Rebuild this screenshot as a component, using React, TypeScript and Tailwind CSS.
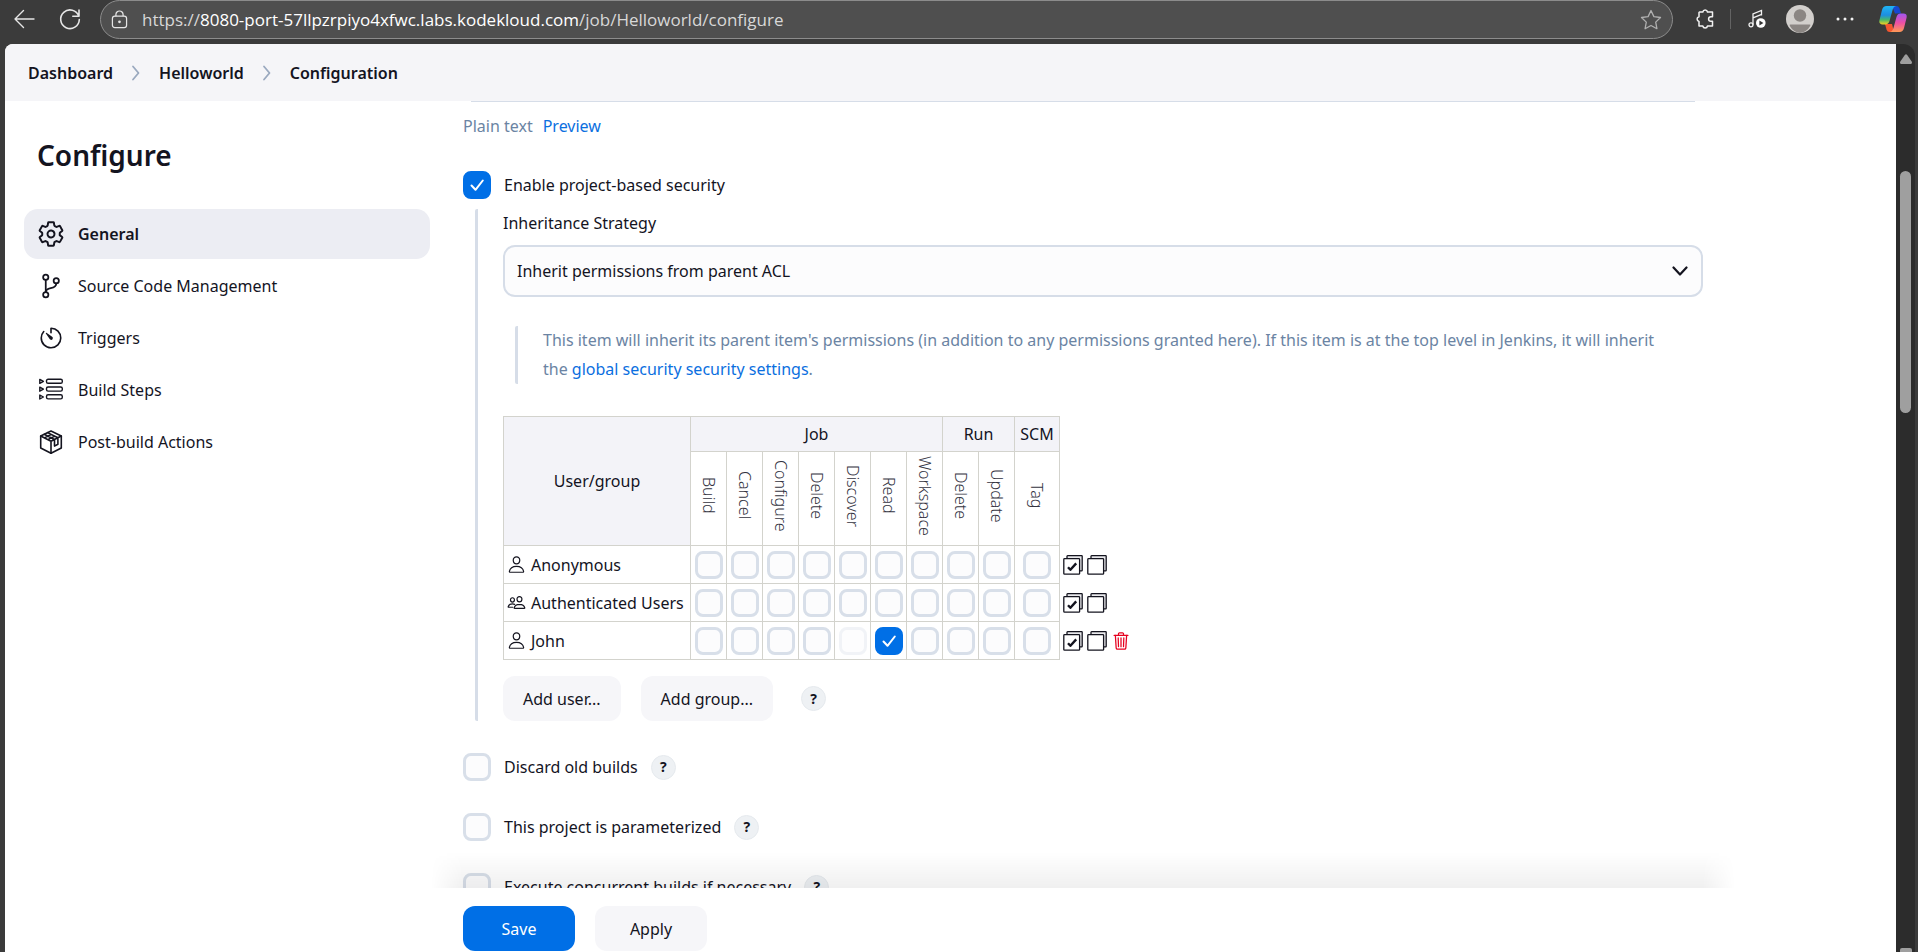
import { ReactNode } from "react";
import {
  IoGitBranchOutline,
  IoPeopleOutline,
  IoPersonOutline,
  IoSettingsOutline,
  IoTimerOutline,
  IoTrashOutline,
} from "react-icons/io5";

function Checkbox({ id, label, checked = false, disabled = false }: { id?: string; label?: string; checked?: boolean; disabled?: boolean }) {
  return (
    <span className="inline-grid size-7 shrink-0 align-middle">
      <input
        id={id}
        type="checkbox"
        aria-label={label}
        defaultChecked={checked}
        disabled={disabled}
        className="peer col-start-1 row-start-1 size-7 appearance-none rounded-lg border-3 border-[#d8dfe9] bg-[#fcfcfd] checked:border-[#006fe6] checked:bg-[#006fe6] disabled:opacity-35"
      />
      <svg viewBox="0 0 28 28" className="pointer-events-none invisible col-start-1 row-start-1 size-7 peer-checked:visible" fill="none" stroke="#fff" strokeWidth="2" strokeLinecap="round" strokeLinejoin="round">
        <path d="M8.5 14.5l4 4.3 7.3-9.3" />
      </svg>
    </span>
  );
}

function Help({ topic }: { topic: string }) {
  return (
    <button type="button" aria-label={`Help for ${topic}`} className="flex size-[25px] shrink-0 items-center justify-center rounded-full border border-[#e6eaee] bg-[#eef1f4] text-sm font-bold leading-none">
      ?
    </button>
  );
}

function Steps() {
  return (
    <svg viewBox="0 0 24 24" className="size-6" fill="none" stroke="currentColor" strokeWidth="1.4" strokeLinejoin="round">
      {[3.2, 11, 18.8].map((y) => (
        <g key={y}>
          <path d={`M.8 ${y - 1.8}v4l3.6-2z`} />
          <rect x="7.5" y={y - 2} width="15.8" height="4.1" rx="1.6" />
        </g>
      ))}
    </svg>
  );
}

function PackageBox() {
  return (
    <svg viewBox="0 0 24 24" className="size-6" fill="none" stroke="currentColor" strokeWidth="1.6" strokeLinejoin="round" strokeLinecap="round">
      <path d="M12 1L22.3 6v12L12 23.2 1.700 18V6z" />
      <path d="M1.700 6L12 11.2 22.3 6M12 11.2v12M5.200 4.300l10.300 5.200v6.600l3.400-1.800V7.800L8.600 2.600M5.400 7.900l6.600-3.400M8.800 9.600l6.600-3.400" />
    </svg>
  );
}

const sections: { name: string; icon: ReactNode }[] = [
  { name: "General", icon: <IoSettingsOutline className="size-7 [&_path]:[stroke-width:36px]" /> },
  { name: "Source Code Management", icon: <IoGitBranchOutline className="size-7" /> },
  { name: "Triggers", icon: <IoTimerOutline className="size-[26px]" /> },
  { name: "Build Steps", icon: <Steps /> },
  { name: "Post-build Actions", icon: <PackageBox /> },
];

const groups = [
  { name: "Job", permissions: ["Build", "Cancel", "Configure", "Delete", "Discover", "Read", "Workspace"] },
  { name: "Run", permissions: ["Delete", "Update"] },
  { name: "SCM", permissions: ["Tag"] },
];

const columns = groups.flatMap((g) => g.permissions.map((p) => `${g.name}/${p}`));

const subjects = [
  { name: "Anonymous", kind: "person", granted: "", implied: "", removable: false },
  { name: "Authenticated Users", kind: "people", granted: "", implied: "", removable: false },
  { name: "John", kind: "person", granted: "Job/Read", implied: "Job/Discover", removable: true },
];

function StackIcon({ ticked }: { ticked: boolean }) {
  return (
    <svg viewBox="0 0 20 20" className="size-5" fill="none" stroke="currentColor" strokeWidth="1.3" strokeLinejoin="round">
      <path d="M4 3.5V1.3q0-.6.6-.6h14q.6 0 .6.6v14q0 .6-.6.6h-2" fill="#e9e9ec" />
      <rect x=".8" y="3.6" width="15.8" height="15.6" rx=".8" fill="#fff" />
      {ticked && <path d="M5 12.2l2.4 2.6 5.8-6.4" strokeWidth="2.4" />}
    </svg>
  );
}

function BrowserBar() {
  return (
    <header className="flex h-11 shrink-0 items-start text-[#e6e6e6]">
      <button type="button" aria-label="Back" className="mt-2 ml-3 flex size-6 items-center justify-center">
        <svg viewBox="0 0 24 24" className="size-6" fill="none" stroke="currentColor" strokeWidth="1.4" strokeLinecap="round" strokeLinejoin="round">
          <path d="M22 11H3M11.5 2.500L3 11l8.500 8.500" />
        </svg>
      </button>
      <button type="button" aria-label="Refresh" className="mt-2 ml-[22px] flex size-6 items-center justify-center">
        <svg viewBox="0 0 24 24" className="size-6" fill="none" stroke="currentColor" strokeWidth="1.6" strokeLinecap="round" strokeLinejoin="round">
          <path d="M20.800 8.200A9.300 9.300 0 1 0 21.300 11.500M21 2v6.200h-6.200" />
        </svg>
      </button>
      <div className="ml-[18px] flex h-[39px] min-w-0 flex-1 items-center rounded-full border border-[#8c8c8c] bg-[#4f4f4f] pr-2.5 pl-2.5">
        <svg viewBox="0 0 18 20" className="h-[19px] w-[17px] shrink-0" fill="none" stroke="currentColor" strokeWidth="1.300">
          <rect x="1.500" y="6.500" width="15" height="12" rx="2.500" />
          <path d="M5.200 6.500V4.800a3.800 3.800 0 0 1 7.600 0v1.700" />
          <circle cx="9" cy="12.500" r=".8" fill="currentColor" />
        </svg>
        <p className="ml-3.5 flex-1 truncate font-['Open_Sans','Noto_Sans',sans-serif] text-[17px] leading-6 text-[#d8d8d8]">
          https://<span className="text-white">8080-port-57llpzrpiyo4xfwc.labs.kodekloud.com</span>/job/Helloworld/configure
        </p>
        <button type="button" aria-label="Add to favorites">
          <svg viewBox="0 0 22 22" className="size-[22px]" fill="none" stroke="#b0b0b0" strokeWidth="1.300" strokeLinejoin="round">
            <path d="M11 1.500l2.900 6.100 6.600.9-4.800 4.600 1.200 6.600L11 16.500l-5.900 3.200 1.200-6.600L1.500 8.500l6.600-.9z" />
          </svg>
        </button>
      </div>
      <div className="flex h-[38px] items-center">
        <svg viewBox="0 0 20 22" className="ml-[22px] h-[22px] w-5" fill="none" stroke="#f2f2f2" strokeWidth="1.500" strokeLinejoin="round">
          <path d="M4.500 4h3.300a2.400 2.400 0 0 1 4.700 0h5v4.700h-1.600a2.300 2.300 0 0 0 0 4.600h1.600V18h-5a2.400 2.400 0 0 1-4.700 0H4v-4.600a2.400 2.400 0 0 1 0-4.700V4.500z" />
        </svg>
        <span className="ml-[15px] h-5 w-px bg-[#636363]" />
        <svg viewBox="0 0 18 20" className="ml-[17px] h-5 w-[18px]" fill="none" stroke="#f2f2f2" strokeWidth="1.300">
          <circle cx="3" cy="15.800" r="2" />
          <path d="M5 15.800V5l8.500-3.500v5M5 8.800l8-3.200" />
          <circle cx="12.800" cy="14" r="4.800" fill="#fff" stroke="none" />
          <path d="M11.400 11.600v4.800l4-2.400z" fill="#333" stroke="none" />
        </svg>
        <svg viewBox="0 0 28 28" className="ml-[20px] size-7">
          <circle cx="14" cy="14" r="14" fill="#d2cfcc" />
          <circle cx="14" cy="10.500" r="6.200" fill="#8b8683" />
          <path d="M4.500 19.500h19q1.500 0 .6 1.400A14 14 0 0 1 14 28a14 14 0 0 1-10.100-7.100q-.9-1.400.6-1.400z" fill="#8b8683" />
        </svg>
        <svg viewBox="0 0 18 4" className="ml-[22px] h-1 w-[18px]" fill="#f2f2f2">
          <circle cx="2" cy="2" r="1.500" />
          <circle cx="9" cy="2" r="1.500" />
          <circle cx="16" cy="2" r="1.500" />
        </svg>
        <svg viewBox="0 0 28 26" className="mr-[11px] ml-[25px] h-[26px] w-7">
          <defs>
            <linearGradient id="cpLeft" x1="0" y1="0" x2="0" y2="1">
              <stop offset="0" stopColor="#1fb4f5" />
              <stop offset=".5" stopColor="#1d8ee0" />
              <stop offset=".75" stopColor="#48b96a" />
              <stop offset="1" stopColor="#f3d021" />
            </linearGradient>
            <linearGradient id="cpRight" x1="0" y1="0" x2="0" y2="1">
              <stop offset="0" stopColor="#a056f0" />
              <stop offset=".5" stopColor="#ec4fa4" />
              <stop offset="1" stopColor="#ff9a55" />
            </linearGradient>
          </defs>
          <path d="M13 0h4.500q2.200 0 2.900 2.200L22 7.500h-6z" fill="#1648d0" />
          <path d="M6 18h7l2 8h-4.500q-2.200 0-2.900-2.200z" fill="#f4562f" />
          <path d="M7.500 0H17q-2.400.3-3.300 3.500L10.500 15q-1 3.400-4.300 3.400H3.500Q-.5 18.400.5 14L3 4Q4 0 7.500 0z" fill="url(#cpLeft)" />
          <path d="M20.500 26H11q2.400-.3 3.300-3.500L17.500 11q1-3.400 4.300-3.400h2.700q4 0 3 4.400L25 22q-1 4-4.500 4z" fill="url(#cpRight)" />
        </svg>
      </div>
    </header>
  );
}

function PermissionTable() {
  const cell = "border border-[#d3d3cd]";
  return (
    <div className="mt-8 flex items-end">
      <table className="border-collapse leading-6">
        <thead>
          <tr className="h-[35px]">
            <th rowSpan={2} className={`${cell} w-[187px] bg-[#f3f3f8] font-normal`}>User/group</th>
            {groups.map((g) => (
              <th key={g.name} colSpan={g.permissions.length} className={`${cell} bg-[#f3f3f8] p-0 font-normal`}>{g.name}</th>
            ))}
          </tr>
          <tr className="h-[94px]">
            {columns.map((c) => (
              <th key={c} className={`${cell} ${c === "SCM/Tag" ? "w-[45px]" : "w-9"} p-0 pb-1.5 text-base font-light text-[#33333f]`}>
                <span className="inline-block align-middle leading-6 [writing-mode:vertical-rl]">{c.split("/")[1]}</span>
              </th>
            ))}
          </tr>
        </thead>
        <tbody>
          {subjects.map((s) => (
            <tr key={s.name} className="h-[38px]">
              <td className={`${cell} px-[3px]`}>
                <span className="flex items-center gap-[5px] whitespace-nowrap">
                  {s.kind === "person" ? <IoPersonOutline className="size-[19px]" /> : <IoPeopleOutline className="size-[19px]" />}
                  {s.name}
                </span>
              </td>
              {columns.map((c) => (
                <td key={c} className={`${cell} p-0 text-center leading-none`}>
                  <Checkbox label={`${c} for ${s.name}`} checked={s.granted === c} disabled={s.implied === c} />
                </td>
              ))}
            </tr>
          ))}
        </tbody>
      </table>
      <ul className="ml-[3px]">
        {subjects.map((s) => (
          <li key={s.name} className="flex h-[38px] items-center gap-1">
            <button type="button" aria-label={`Select all for ${s.name}`}><StackIcon ticked /></button>
            <button type="button" aria-label={`Unselect all for ${s.name}`}><StackIcon ticked={false} /></button>
            {s.removable && (
              <button type="button" aria-label={`Remove ${s.name}`} className="text-[#e6001f]">
                <IoTrashOutline className="size-5" />
              </button>
            )}
          </li>
        ))}
      </ul>
    </div>
  );
}

const options = [
  { id: "discard", name: "Discard old builds" },
  { id: "parameterized", name: "This project is parameterized" },
  { id: "concurrent", name: "Execute concurrent builds if necessary" },
];

function Separator() {
  return (
    <svg viewBox="0 0 10 16" className="h-4 w-2.5" fill="none" stroke="#9aa9bf" strokeWidth="1.800" strokeLinecap="round" strokeLinejoin="round">
      <path d="M2 1.500L7.500 8 2 14.500" />
    </svg>
  );
}

export default function App() {
  return (
    <div className="flex h-screen flex-col overflow-hidden bg-[#3b3b3b] font-['Noto_Sans','Open_Sans',sans-serif] text-base text-[#14141f]">
      <BrowserBar />
      <div className="flex min-h-0 flex-1 pr-[3px] pl-[5px]">
        <div className="flex min-w-0 flex-1 flex-col overflow-hidden rounded-tl-lg bg-white">
          <nav aria-label="Breadcrumb" className="flex h-[57px] shrink-0 items-center gap-[18px] bg-[#f5f5f8] px-[23px] font-semibold">
            <a href="#dashboard">Dashboard</a>
            <Separator />
            <a href="#helloworld">Helloworld</a>
            <Separator />
            <a href="#configuration">Configuration</a>
          </nav>
          <div className="flex min-h-0 flex-1">
            <aside className="w-[458px] shrink-0 pr-[33px] pl-[19px]">
              <h1 className="mt-8 pl-[13px] text-[28px] leading-[44px] font-semibold">Configure</h1>
              <nav aria-label="Sections" className="mt-8 flex flex-col gap-0.5">
                {sections.map((s, i) => (
                  <a
                    key={s.name}
                    href={`#${s.name}`}
                    className={i === 0 ? "flex h-[50px] items-center gap-[13px] rounded-[14px] bg-[#ecedf3] px-[13px] font-semibold" : "flex h-[50px] items-center gap-[13px] rounded-[14px] px-[13px]"}
                  >
                    <span className="flex size-7 items-center justify-center">{s.icon}</span>
                    {s.name}
                  </a>
                ))}
              </nav>
            </aside>
            <main className="mr-8 flex max-w-[1240px] min-w-0 flex-1 flex-col">
              <div className="min-h-0 flex-1 overflow-hidden">
                <div className="mx-2 h-px bg-[#d6dde8]" />
                <div className="mt-3 flex gap-2.5 leading-6">
                  <span className="text-[#6b84a3]">Plain text</span>
                  <a href="#preview" className="text-[#0b6fe0]">Preview</a>
                </div>
                <div className="mt-[33px] flex items-center gap-[13px]">
                  <Checkbox id="security" checked />
                  <label htmlFor="security">Enable project-based security</label>
                </div>
                <div className="mt-2.5 ml-3 flex flex-col rounded-xs border-l-[3px] border-[#d6dde8] pl-[25px]">
                  <label htmlFor="strategy" className="leading-7">Inheritance Strategy</label>
                  <div className="mt-2 grid">
                    <select id="strategy" className="col-start-1 row-start-1 h-[52px] w-full appearance-none rounded-xl border-2 border-[#d6dde8] bg-[#fcfcfd] px-3">
                      <option>Inherit permissions from parent ACL</option>
                    </select>
                    <svg viewBox="0 0 16 10" className="pointer-events-none col-start-1 row-start-1 mr-[15px] h-2.5 w-4 self-center justify-self-end" fill="none" stroke="currentColor" strokeWidth="2.200" strokeLinecap="round" strokeLinejoin="round">
                      <path d="M1.500 1.500L8 8.500l6.500-7" />
                    </svg>
                  </div>
                  <p className="mt-[29px] ml-3 rounded-xs border-l-[3px] border-[#d6dde8] pr-8 pl-[25px] leading-[29px] text-[#6b84a3]">
                    This item will inherit its parent item's permissions (in addition to any permissions granted here). If this item is at the top level in Jenkins, it will inherit
                    the <a href="#global-security" className="text-[#0b6fe0]">global security security settings</a>.
                  </p>
                  <PermissionTable />
                  <div className="mt-4 flex items-center gap-5">
                    <button type="button" className="h-[45px] rounded-xl bg-[#f6f6f9] px-5">Add user...</button>
                    <button type="button" className="h-[45px] rounded-xl bg-[#f6f6f9] px-5">Add group...</button>
                    <span className="ml-2"><Help topic="project-based security" /></span>
                  </div>
                </div>
                {options.map((o) => (
                  <div key={o.id} className="mt-8 flex h-7 items-center gap-[13px]">
                    <Checkbox id={o.id} />
                    <label htmlFor={o.id}>{o.name}</label>
                    <Help topic={o.name} />
                  </div>
                ))}
              </div>
              <footer className="relative z-10 flex h-16 shrink-0 items-start gap-5 bg-white pt-[18px]">
                <div className="pointer-events-none absolute -inset-x-8 bottom-full h-9 bg-linear-to-t from-black/6 to-transparent [mask-image:linear-gradient(to_right,transparent,black_32px,black_calc(100%_-_32px),transparent)]" />
                <button type="submit" className="h-[45px] w-28 rounded-xl bg-[#006fe6] text-white">Save</button>
                <button type="button" className="h-[45px] w-28 rounded-xl bg-[#f6f6f9]">Apply</button>
              </footer>
            </main>
          </div>
        </div>
        <div className="flex w-[19px] shrink-0 flex-col items-center overflow-hidden rounded-tr-xl bg-[#2c2c2c]">
          <svg viewBox="0 0 12 10" className="mt-2.5 h-2.5 w-3" fill="#9f9f9f">
            <path d="M5 .8q1-1 2 0l4.800 7q.6 2-.8 2.200H1Q-.4 9.800.2 7.800z" />
          </svg>
          <div className="mt-[107px] h-[242px] w-[11px] shrink-0 rounded-full bg-[#9f9f9f]" />
          <div className="mt-auto h-1 w-3 rounded-t-xs bg-[#9f9f9f]" />
        </div>
      </div>
    </div>
  );
}
